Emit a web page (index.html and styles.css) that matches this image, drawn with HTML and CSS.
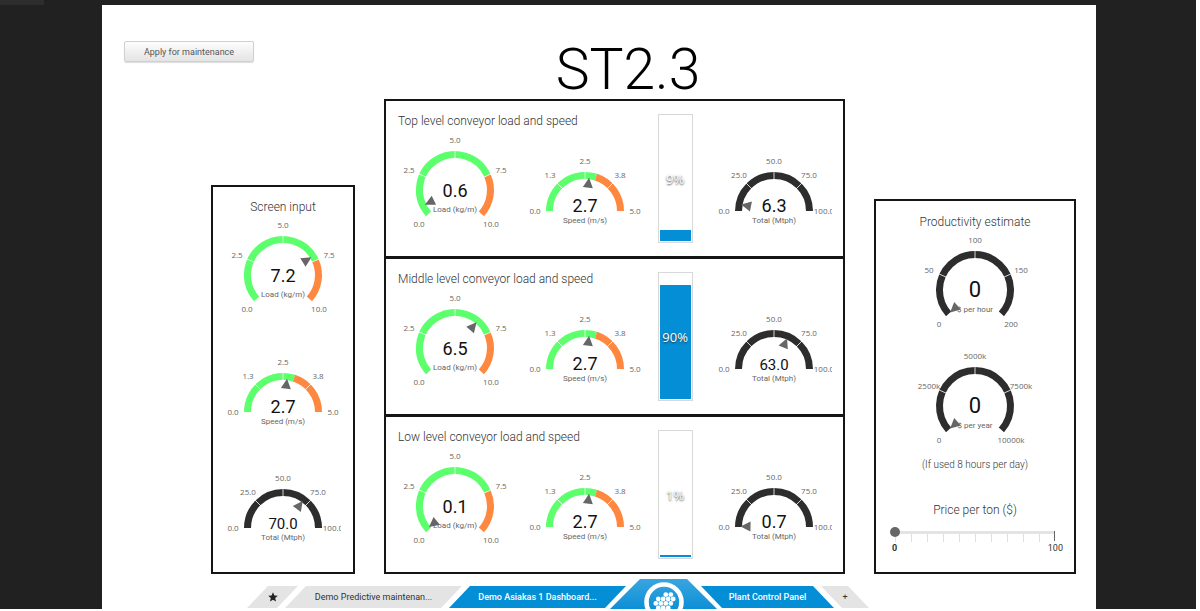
FILE: index.html
```html
<!DOCTYPE html>
<html lang="en">
<head>
<meta charset="utf-8">
<title>ST2.3</title>
<link rel="stylesheet" href="styles.css">
</head>
<body>
<svg class="defs" aria-hidden="true">
  <symbol id="dial-load" overflow="visible">
    <path class="arc ok" d="M-26.4 23.8A35.5 35.5 0 1 1 32.4-14.4"/>
    <path class="arc high" d="M32.4-14.4A35.5 35.5 0 0 1 26.4 23.8"/>
    <path class="notch" d="M0-31V-40M-28.3-12.6L-36.5-16.3M28.3-12.6L36.5-16.3"/>
  </symbol>
  <symbol id="dial-money" overflow="visible">
    <path class="arc plain" d="M-26.4 23.8A35.5 35.5 0 1 1 26.4 23.8"/>
    <path class="notch" d="M0-31V-40M-28.3-12.6L-36.5-16.3M28.3-12.6L36.5-16.3"/>
  </symbol>
  <symbol id="dial-speed" overflow="visible">
    <path class="arc ok" d="M-35.5 0A35.5 35.5 0 0 1 11-33.8"/>
    <path class="arc high" d="M11-33.8A35.5 35.5 0 0 1 35.5 0"/>
    <path class="notch" d="M0-31V-40M-22-22L-28.3-28.3M22-22L28.3-28.3"/>
  </symbol>
  <symbol id="dial-total" overflow="visible">
    <path class="arc plain" d="M-35.5 0A35.5 35.5 0 0 1 35.5 0"/>
    <path class="notch" d="M0-31V-40M-22-22L-28.3-28.3M22-22L28.3-28.3"/>
  </symbol>
  <symbol id="needle" overflow="visible"><path d="M0-33.5L5-23.5H-5Z" fill="#666"/></symbol>
</svg>

<div class="frame">
  <div class="corner"></div>
  <main class="page">
    <header class="top">
      <button class="apply" type="button">Apply for maintenance</button>
      <h1>ST2.3</h1>
    </header>

    <div class="board">
      <section class="panel side">
        <h2>Screen input</h2>
        <div class="stack">
          <svg class="gauge round" viewBox="-58 -54 116 94">
            <use href="#dial-load"/>
            <text class="scale" x="0" y="-47">5.0</text><text class="scale" x="-46" y="-17">2.5</text><text class="scale" x="46" y="-17">7.5</text><text class="scale" x="-36" y="37">0.0</text><text class="scale" x="36" y="37">10.0</text>
            <text class="value" y="7">7.2</text><text class="unit" y="22">Load (kg/m)</text>
            <use href="#needle" transform="rotate(58)"/>
          </svg>
          <svg class="gauge half" viewBox="-58 -54 116 73">
            <use href="#dial-speed"/>
            <text class="scale" x="0" y="-47">2.5</text><text class="scale" x="-35" y="-33">1.3</text><text class="scale" x="35" y="-33">3.8</text><text class="scale" x="-50" y="3">0.0</text><text class="scale" x="50" y="3">5.0</text>
            <text class="value" y="1">2.7</text><text class="unit" y="12">Speed (m/s)</text>
            <use href="#needle" transform="rotate(7)"/>
          </svg>
          <svg class="gauge half" viewBox="-58 -54 116 73">
            <use href="#dial-total"/>
            <text class="scale" x="0" y="-47">50.0</text><text class="scale" x="-35" y="-33">25.0</text><text class="scale" x="35" y="-33">75.0</text><text class="scale" x="-50" y="3">0.0</text><text class="scale" x="50" y="3">100.0</text>
            <text class="value small" y="1">70.0</text><text class="unit" y="12">Total (Mtph)</text>
            <use href="#needle" transform="rotate(36)"/>
          </svg>
        </div>
      </section>

      <div class="levels">
        <section class="panel level">
          <h2>Top level conveyor load and speed</h2>
          <svg class="gauge round" viewBox="-58 -54 116 94">
            <use href="#dial-load"/>
            <text class="scale" x="0" y="-47">5.0</text><text class="scale" x="-46" y="-17">2.5</text><text class="scale" x="46" y="-17">7.5</text><text class="scale" x="-36" y="37">0.0</text><text class="scale" x="36" y="37">10.0</text>
            <text class="value" y="7">0.6</text><text class="unit" y="22">Load (kg/m)</text>
            <use href="#needle" transform="rotate(-116)"/>
          </svg>
          <svg class="gauge half" viewBox="-58 -54 116 73">
            <use href="#dial-speed"/>
            <text class="scale" x="0" y="-47">2.5</text><text class="scale" x="-35" y="-33">1.3</text><text class="scale" x="35" y="-33">3.8</text><text class="scale" x="-50" y="3">0.0</text><text class="scale" x="50" y="3">5.0</text>
            <text class="value" y="1">2.7</text><text class="unit" y="12">Speed (m/s)</text>
            <use href="#needle" transform="rotate(7)"/>
          </svg>
          <div class="bar" role="progressbar" aria-valuenow="9" aria-label="Top level fill"><div class="fill" style="height:9%"></div><span>9%</span></div>
          <svg class="gauge half total" viewBox="-58 -54 116 73">
            <use href="#dial-total"/>
            <text class="scale" x="0" y="-47">50.0</text><text class="scale" x="-35" y="-33">25.0</text><text class="scale" x="35" y="-33">75.0</text><text class="scale" x="-50" y="3">0.0</text><text class="scale" x="50" y="3">100.0</text>
            <text class="value" y="1">6.3</text><text class="unit" y="12">Total (Mtph)</text>
            <use href="#needle" transform="rotate(-79)"/>
          </svg>
        </section>

        <section class="panel level">
          <h2>Middle level conveyor load and speed</h2>
          <svg class="gauge round" viewBox="-58 -54 116 94">
            <use href="#dial-load"/>
            <text class="scale" x="0" y="-47">5.0</text><text class="scale" x="-46" y="-17">2.5</text><text class="scale" x="46" y="-17">7.5</text><text class="scale" x="-36" y="37">0.0</text><text class="scale" x="36" y="37">10.0</text>
            <text class="value" y="7">6.5</text><text class="unit" y="22">Load (kg/m)</text>
            <use href="#needle" transform="rotate(40)"/>
          </svg>
          <svg class="gauge half" viewBox="-58 -54 116 73">
            <use href="#dial-speed"/>
            <text class="scale" x="0" y="-47">2.5</text><text class="scale" x="-35" y="-33">1.3</text><text class="scale" x="35" y="-33">3.8</text><text class="scale" x="-50" y="3">0.0</text><text class="scale" x="50" y="3">5.0</text>
            <text class="value" y="1">2.7</text><text class="unit" y="12">Speed (m/s)</text>
            <use href="#needle" transform="rotate(7)"/>
          </svg>
          <div class="bar" role="progressbar" aria-valuenow="90" aria-label="Middle level fill"><div class="fill" style="height:91%"></div><span>90%</span></div>
          <svg class="gauge half total" viewBox="-58 -54 116 73">
            <use href="#dial-total"/>
            <text class="scale" x="0" y="-47">50.0</text><text class="scale" x="-35" y="-33">25.0</text><text class="scale" x="35" y="-33">75.0</text><text class="scale" x="-50" y="3">0.0</text><text class="scale" x="50" y="3">100.0</text>
            <text class="value small" y="1">63.0</text><text class="unit" y="12">Total (Mtph)</text>
            <use href="#needle" transform="rotate(23)"/>
          </svg>
        </section>

        <section class="panel level">
          <h2>Low level conveyor load and speed</h2>
          <svg class="gauge round" viewBox="-58 -54 116 94">
            <use href="#dial-load"/>
            <text class="scale" x="0" y="-47">5.0</text><text class="scale" x="-46" y="-17">2.5</text><text class="scale" x="46" y="-17">7.5</text><text class="scale" x="-36" y="37">0.0</text><text class="scale" x="36" y="37">10.0</text>
            <text class="value" y="7">0.1</text><text class="unit" y="22">Load (kg/m)</text>
            <use href="#needle" transform="rotate(-129)"/>
          </svg>
          <svg class="gauge half" viewBox="-58 -54 116 73">
            <use href="#dial-speed"/>
            <text class="scale" x="0" y="-47">2.5</text><text class="scale" x="-35" y="-33">1.3</text><text class="scale" x="35" y="-33">3.8</text><text class="scale" x="-50" y="3">0.0</text><text class="scale" x="50" y="3">5.0</text>
            <text class="value" y="1">2.7</text><text class="unit" y="12">Speed (m/s)</text>
            <use href="#needle" transform="rotate(7)"/>
          </svg>
          <div class="bar" role="progressbar" aria-valuenow="1" aria-label="Low level fill"><div class="fill" style="height:1.4%"></div><span>1%</span></div>
          <svg class="gauge half total" viewBox="-58 -54 116 73">
            <use href="#dial-total"/>
            <text class="scale" x="0" y="-47">50.0</text><text class="scale" x="-35" y="-33">25.0</text><text class="scale" x="35" y="-33">75.0</text><text class="scale" x="-50" y="3">0.0</text><text class="scale" x="50" y="3">100.0</text>
            <text class="value" y="1">0.7</text><text class="unit" y="12">Total (Mtph)</text>
            <use href="#needle" transform="rotate(-89)"/>
          </svg>
        </section>
      </div>

      <section class="panel side estimate">
        <h2>Productivity estimate</h2>
        <div class="stack tight">
          <svg class="gauge round" viewBox="-58 -54 116 94">
            <use href="#dial-money"/>
            <text class="scale" x="0" y="-47">100</text><text class="scale" x="-46" y="-17">50</text><text class="scale" x="46" y="-17">150</text><text class="scale" x="-36" y="37">0</text><text class="scale" x="36" y="37">200</text>
            <text class="value big" y="7">0</text><text class="unit" y="22">$ per hour</text>
            <use href="#needle" transform="rotate(-132)"/>
          </svg>
          <svg class="gauge round" viewBox="-58 -54 116 94">
            <use href="#dial-money"/>
            <text class="scale" x="0" y="-47">5000k</text><text class="scale" x="-46" y="-17">2500k</text><text class="scale" x="46" y="-17">7500k</text><text class="scale" x="-36" y="37">0</text><text class="scale" x="36" y="37">10000k</text>
            <text class="value big" y="7">0</text><text class="unit" y="22">$ per year</text>
            <use href="#needle" transform="rotate(-132)"/>
          </svg>
        </div>
        <p class="note">(If used 8 hours per day)</p>
        <label class="price" for="price">Price per ton ($)</label>
        <input id="price" class="slider" type="range" min="0" max="100" value="0">
        <div class="ends"><b>0</b><span>100</span></div>
      </section>
    </div>

    <nav class="tabs">
      <a class="tab star" href="#favourites" aria-label="Favourites"><svg width="10" height="10" viewBox="0 0 10 10"><path fill="#222" d="M5 .3L6.4 3.5 9.8 3.8 7.2 6.1 8 9.5 5 7.7 2 9.5 2.8 6.1.2 3.8 3.6 3.5Z"/></svg></a>
      <a class="tab" href="#predictive">Demo Predictive maintenan...</a>
      <a class="tab active" href="#asiakas">Demo Asiakas 1 Dashboard...</a>
      <a class="home" href="#home" aria-label="Home">
        <svg width="40" height="27" viewBox="-20 -20 40 27">
          <circle r="17.5" fill="none" stroke="#fff" stroke-width="4.6"/>
          <g fill="#fff">
            <circle cx="1.8" cy="-7.4" r="2.4"/><circle cx="6.8" cy="-7.4" r="2.4"/>
            <circle cx="-5.7" cy="-3" r="2.4"/><circle cx="-.8" cy="-3" r="2.4"/><circle cx="4.2" cy="-3" r="2.4"/><circle cx="9.2" cy="-3" r="2.4"/>
            <circle cx="-8.2" cy="1.4" r="2.4"/><circle cx="-3.2" cy="1.4" r="2.4"/><circle cx="1.8" cy="1.4" r="2.4"/><circle cx="6.8" cy="1.4" r="2.4"/>
            <circle cx="-5.7" cy="5.8" r="2.4"/><circle cx="-.8" cy="5.8" r="2.4"/><circle cx="4.2" cy="5.8" r="2.4"/>
          </g>
        </svg>
      </a>
      <a class="tab active right" href="#plant">Plant Control Panel</a>
      <button class="tab right add" type="button" aria-label="Add dashboard">+</button>
    </nav>
  </main>
</div>
</body>
</html>
```
FILE: styles.css
```css
* { box-sizing: border-box; }

html { background: #fff; }

body {
  margin: 0;
  padding: 0 4px 2px 0;
  min-height: 100vh;
  display: flex;
  font-family: Roboto, "Liberation Sans", sans-serif;
  color: #333;
}

.defs { position: absolute; width: 0; height: 0; }

.frame {
  flex: 1;
  display: flex;
  flex-direction: column;
  background: #212121;
}

.corner { width: 44px; height: 5px; background: #2d2d2d; }

.page {
  flex: 1;
  display: flex;
  flex-direction: column;
  margin: 0 100px 0 102px;
  background: #fff;
}

.top {
  display: flex;
  align-items: flex-start;
  height: 94px;
  padding: 36px 22px 0;
}

.apply {
  width: 130px;
  height: 21px;
  padding: 0;
  border: 1px solid #d0d0d0;
  border-radius: 2px;
  background: linear-gradient(#fdfdfd, #e4e4e4);
  box-shadow: 0 1px 1px #ddd;
  font: 9px Roboto, sans-serif;
  color: #555;
}

h1 {
  flex: 1;
  margin: 0;
  padding-right: 72px;
  text-align: center;
  font-size: 57px;
  line-height: 58px;
  font-weight: 300;
  color: #000;
}

.board {
  display: grid;
  grid-template-columns: 144fr 461fr 202fr;
  gap: 29px;
  align-items: end;
  padding: 0 20px 0 109px;
}

.panel { border: 2px solid #151515; background: #fff; }

h2, .price {
  margin: 0;
  font-size: 12px;
  line-height: 14px;
  font-weight: 300;
  color: #333;
}

.side {
  display: flex;
  flex-direction: column;
  align-items: center;
  padding: 13px 0 25px;
}

.stack {
  display: flex;
  flex-direction: column;
  gap: 43px;
  padding-top: 7px;
}

.tight { gap: 22px; }

.level {
  display: grid;
  grid-template-columns: 116px 116px 35px 125px;
  grid-template-rows: 14px 102px 13px;
  justify-content: space-between;
  align-items: end;
  padding: 13px 11px 13px 11px;
}

.level + .level { margin-top: -1px; }
.level h2 { grid-area: 1 / 1 / 2 / 3; padding-left: 1px; }
.level .gauge { grid-row: 2; }
.level .total { justify-self: end; }

.gauge { display: block; width: 116px; overflow: hidden; }
.round { height: 94px; }
.half { height: 73px; }

.arc { fill: none; stroke-width: 7; }
.ok { stroke: #5cff6c; }
.high { stroke: #ff8841; }
.plain { stroke: #2d2d2d; }
.notch { fill: none; stroke: #fff; stroke-width: 0.8; }

.gauge text { text-anchor: middle; }
.scale { font: 8px "Open Sans", sans-serif; fill: #666; }
.value { font-size: 18px; fill: #111; }
.small { font-size: 15px; }
.big { font-size: 22px; }
.unit { font-size: 8px; fill: #666; }

.bar {
  grid-area: 1 / 3 / 4 / 4;
  align-self: stretch;
  display: grid;
  align-items: center;
  justify-items: center;
  border: 1px solid #d8d8d8;
  padding: 1px;
}

.fill {
  grid-area: 1 / 1;
  align-self: end;
  width: 100%;
  background: #038ed6;
}

.bar span {
  grid-area: 1 / 1;
  font: 500 13px "Open Sans", sans-serif;
  color: #fff;
  text-shadow: 0 1px 2px #333;
}

.estimate { padding: 14px 0 19px; }

.note {
  margin: 12px 0 31px;
  font-size: 10px;
  line-height: 14px;
  font-weight: 300;
  color: #333;
}

.slider {
  appearance: none;
  align-self: stretch;
  height: 16px;
  margin: 10px 14px 0;
  background: none;
}

.slider::-webkit-slider-runnable-track {
  height: 16px;
  background:
    linear-gradient(#666, #666) right 5px top 4px / 1px 10px no-repeat,
    linear-gradient(#e4e4e4, #e4e4e4) 5px 4px / calc(100% - 10px) 3px no-repeat,
    repeating-linear-gradient(90deg, #e0e0e0 0 1px, transparent 1px 10%) 5px 6px / calc(100% - 10px) 9px no-repeat;
}

.slider::-webkit-slider-thumb {
  appearance: none;
  width: 10px;
  height: 10px;
  border-radius: 50%;
  background: #666;
}

.ends {
  align-self: stretch;
  display: flex;
  justify-content: space-between;
  margin: 0 11px 0 16px;
  font-size: 9px;
  line-height: 10px;
}

.tabs {
  display: flex;
  align-items: flex-start;
  padding: 5px 0 0 145px;
}

.tab {
  display: flex;
  align-items: center;
  justify-content: center;
  width: 177px;
  height: 22px;
  margin: 7px -13px 0 0;
  padding: 0;
  border: 0;
  background: #e4e4e4;
  clip-path: polygon(21px 0, 100% 0, calc(100% - 21px) 100%, 0 100%);
  font: 9px Roboto, sans-serif;
  color: #333;
  text-decoration: none;
}

.star { width: 51px; }
.active { background: #038ed6; color: #fff; font-weight: 500; }
.right { width: 133px; clip-path: polygon(0 0, calc(100% - 21px) 0, 100% 100%, 21px 100%); }
.right.add { width: 48px; }

.home {
  display: flex;
  justify-content: center;
  width: 107px;
  height: 30px;
  margin: 0 -16px 0 -3px;
  padding-top: 3px;
  background: linear-gradient(#3aa5df, #0d8fd6);
  clip-path: polygon(30px 0, calc(100% - 30px) 0, 100% 100%, 0 100%);
}
```
